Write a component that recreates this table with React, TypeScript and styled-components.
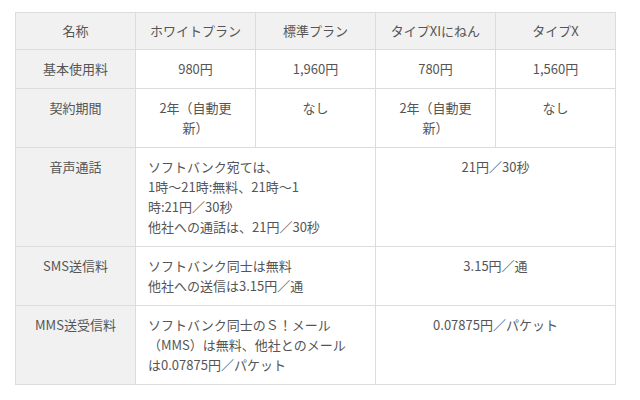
import React from 'react';
import styled, { createGlobalStyle } from 'styled-components';

const GlobalStyle = createGlobalStyle`
  html, body {
    margin: 0;
    padding: 0;
    background: #ffffff;
  }
  body {
    font-family: "Noto Sans CJK JP", "Noto Sans", "Liberation Sans", sans-serif;
    color: #555555;
  }
`;

const Page = styled.div`
  padding: 12px 0 0 15px;
`;

const PlanTable = styled.table`
  width: 600px;
  border-collapse: collapse;
  table-layout: fixed;
  font-size: 13px;
  line-height: 20px;
  border: 1px solid #dcdcdc;
`;

const Col = styled.col`
  width: 120px;
`;

const HeadCell = styled.th`
  padding: 8px 4px;
  background: #f1f1f1;
  border: 1px solid #dcdcdc;
  font-weight: normal;
  text-align: center;
  color: #555555;
`;

const LabelCell = styled.th`
  padding: 9px 4px;
  background: #f1f1f1;
  border: 1px solid #dcdcdc;
  font-weight: normal;
  text-align: center;
  vertical-align: top;
  color: #555555;
`;

const ValueCell = styled.td<{ $left?: boolean }>`
  padding: ${({ $left }) => ($left ? '9px 10px 9px 12px' : '9px 4px')};
  border: 1px solid #dcdcdc;
  text-align: ${({ $left }) => ($left ? 'left' : 'center')};
  vertical-align: top;
  background: #ffffff;
`;

const plans = ['ホワイトプラン', '標準プラン', 'タイプXIにねん', 'タイプX'];
const basicFees = ['980円', '1,960円', '780円', '1,560円'];
const contracts = [
  <>2年（自動更<br />新）</>,
  <>なし</>,
  <>2年（自動更<br />新）</>,
  <>なし</>,
];

const App: React.FC = () => {
  return (
    <Page>
      <GlobalStyle />
      <PlanTable>
        <colgroup>
          <Col />
          <Col />
          <Col />
          <Col />
          <Col />
        </colgroup>
        <thead>
          <tr>
            <HeadCell>名称</HeadCell>
            {plans.map(plan => (
              <HeadCell key={plan}>{plan}</HeadCell>
            ))}
          </tr>
        </thead>
        <tbody>
          <tr>
            <LabelCell>基本使用料</LabelCell>
            {basicFees.map((fee, i) => (
              <ValueCell key={i}>{fee}</ValueCell>
            ))}
          </tr>
          <tr>
            <LabelCell>契約期間</LabelCell>
            {contracts.map((c, i) => (
              <ValueCell key={i}>{c}</ValueCell>
            ))}
          </tr>
          <tr>
            <LabelCell>音声通話</LabelCell>
            <ValueCell colSpan={2} $left>
              ソフトバンク宛ては、<br />
              1時〜21時:無料、21時〜1<br />
              時:21円／30秒<br />
              他社への通話は、21円／30秒
            </ValueCell>
            <ValueCell colSpan={2}>21円／30秒</ValueCell>
          </tr>
          <tr>
            <LabelCell>SMS送信料</LabelCell>
            <ValueCell colSpan={2} $left>
              ソフトバンク同士は無料<br />
              他社への送信は3.15円／通
            </ValueCell>
            <ValueCell colSpan={2}>3.15円／通</ValueCell>
          </tr>
          <tr>
            <LabelCell>MMS送受信料</LabelCell>
            <ValueCell colSpan={2} $left>
              ソフトバンク同士のＳ！メール<br />
              （MMS）は無料、他社とのメール<br />
              は0.07875円／パケット
            </ValueCell>
            <ValueCell colSpan={2}>0.07875円／パケット</ValueCell>
          </tr>
        </tbody>
      </PlanTable>
    </Page>
  );
};

export default App;
